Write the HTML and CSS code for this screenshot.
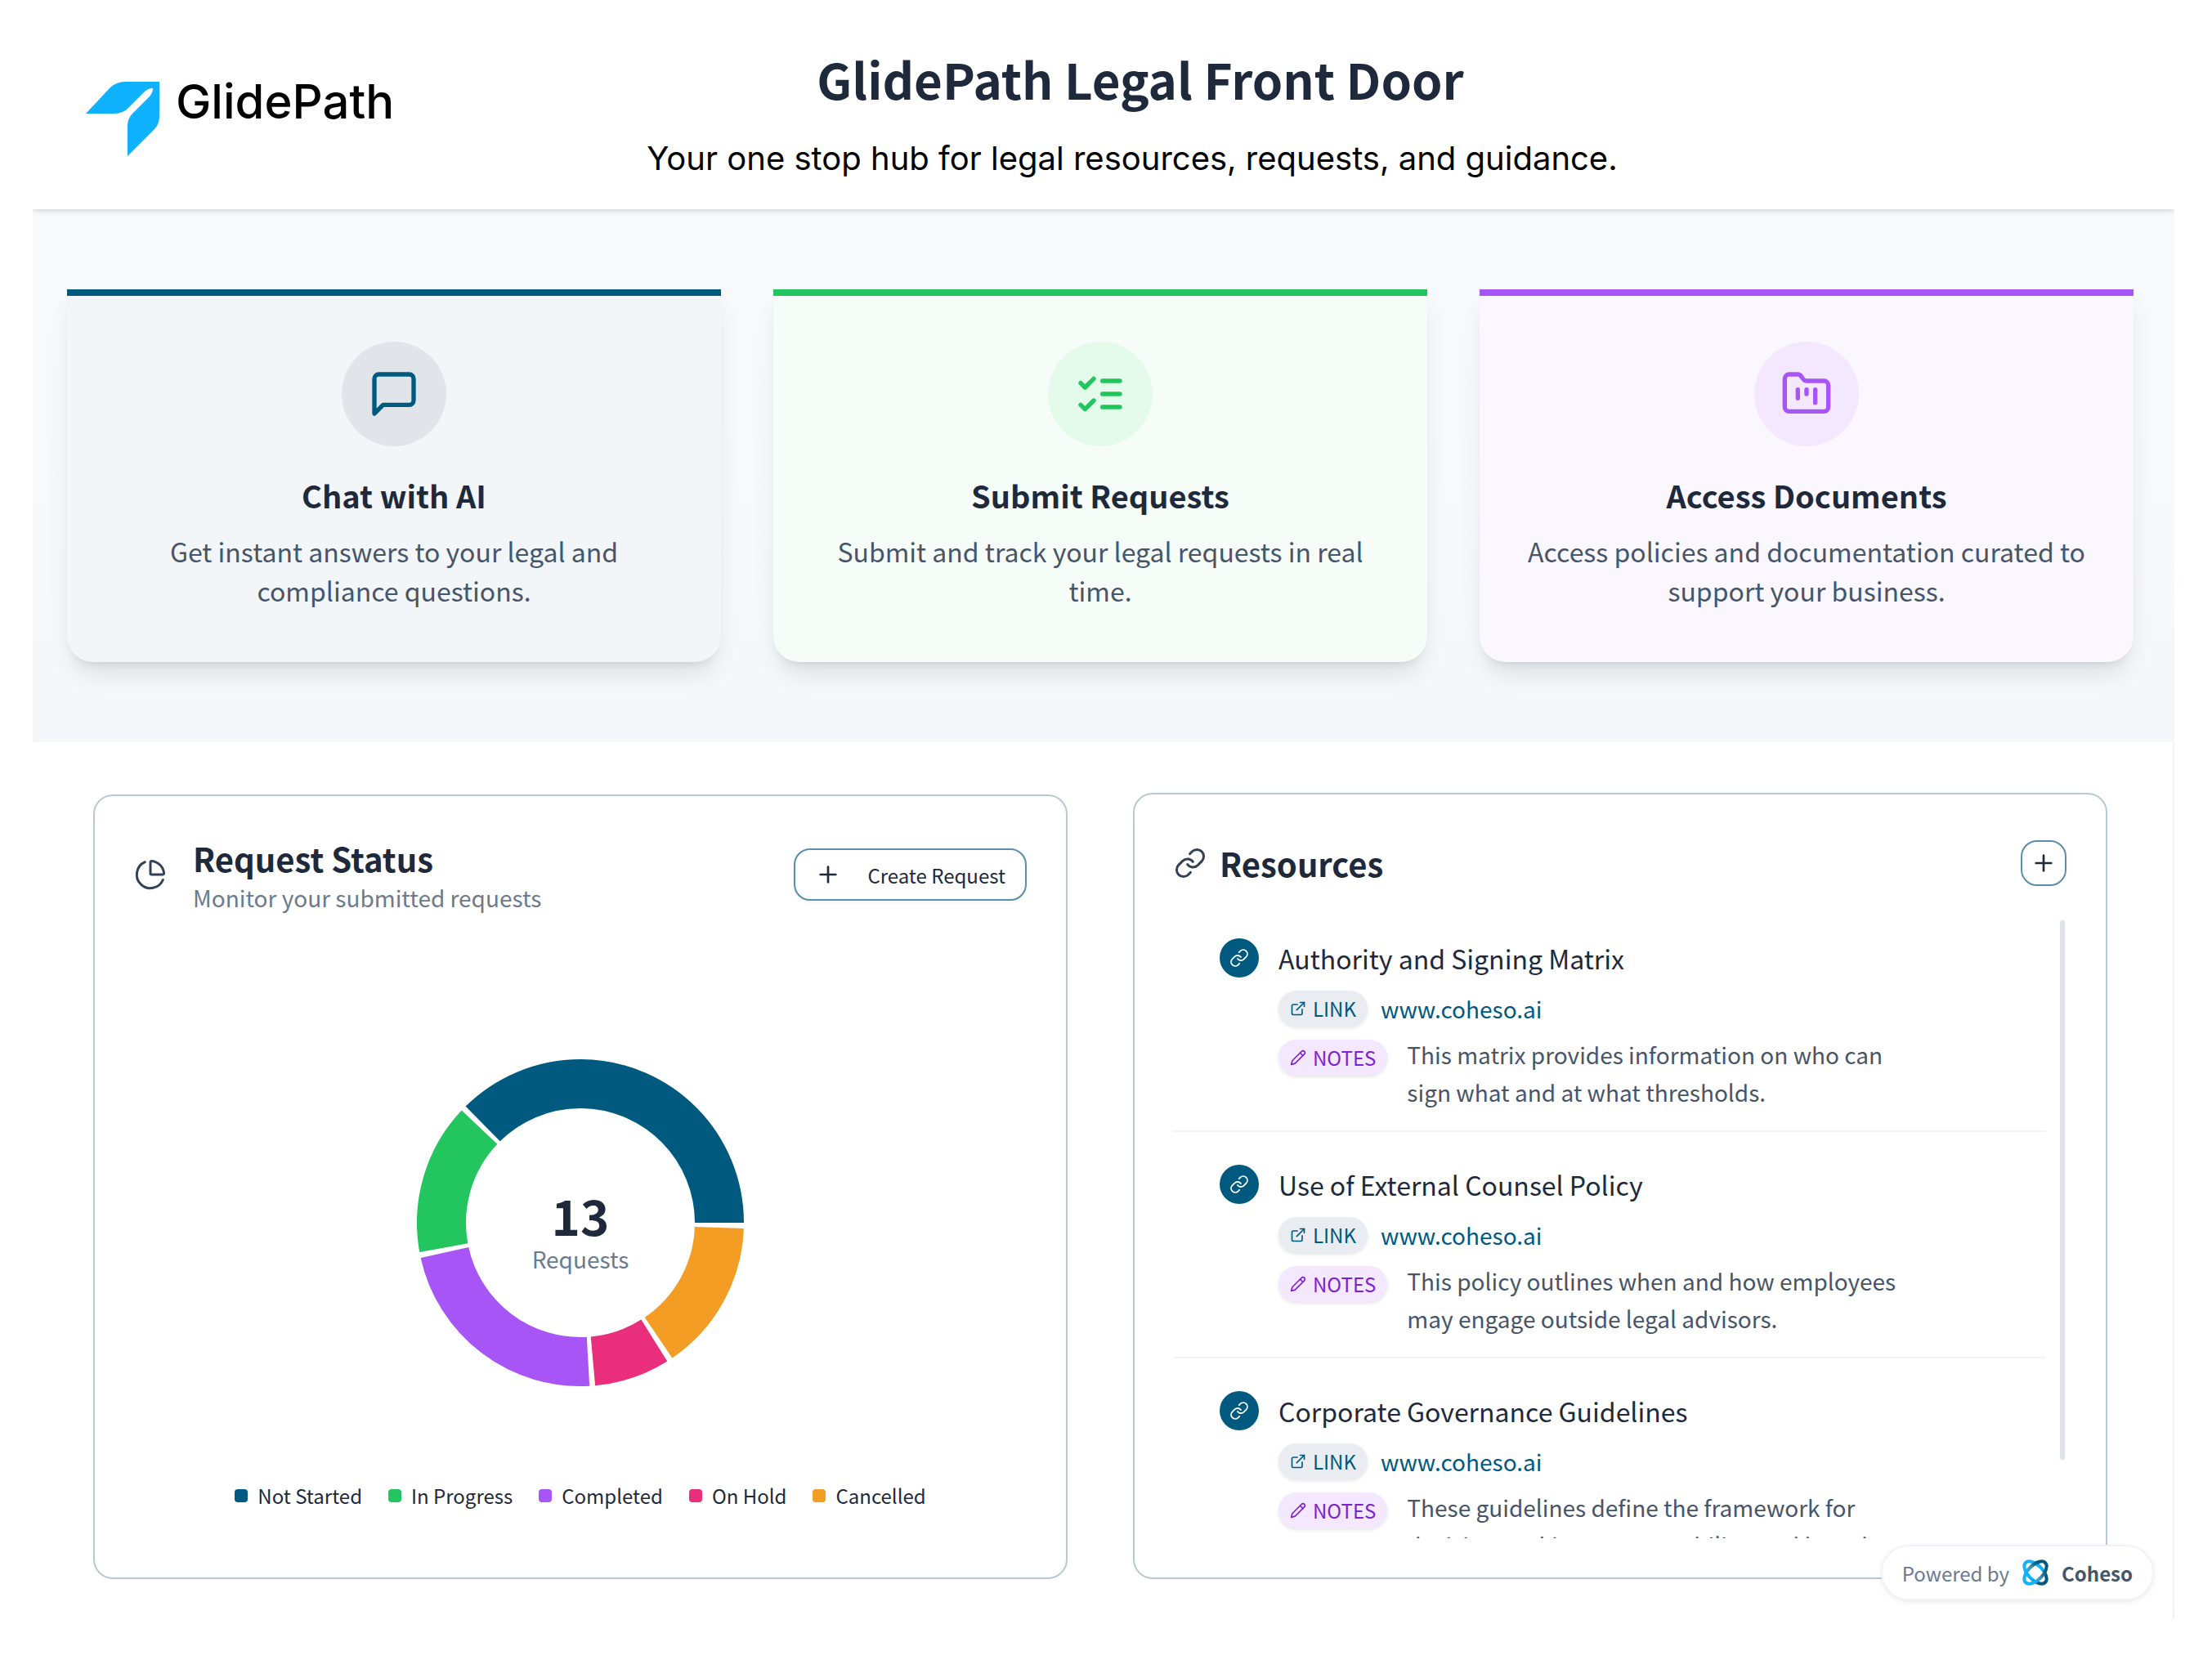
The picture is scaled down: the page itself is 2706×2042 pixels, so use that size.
FILE: index.html
```html
<!DOCTYPE html>
<html lang="en">
<head>
<meta charset="utf-8">
<title>GlidePath Legal Front Door</title>
<link rel="stylesheet" href="styles.css">
</head>
<body>
<svg class="sprite" aria-hidden="true">
  <symbol id="link" viewBox="0 0 24 24"><path d="M10 13a5 5 0 0 0 7.54.54l3-3a5 5 0 0 0-7.07-7.07l-1.72 1.71"/><path d="M14 11a5 5 0 0 0-7.54-.54l-3 3a5 5 0 0 0 7.07 7.07l1.71-1.71"/></symbol>
  <symbol id="external" viewBox="0 0 24 24"><path d="M15 3h6v6"/><path d="M10 14 21 3"/><path d="M18 13v6a2 2 0 0 1-2 2H5a2 2 0 0 1-2-2V8a2 2 0 0 1 2-2h6"/></symbol>
  <symbol id="pencil" viewBox="0 0 24 24"><path d="M17 3a2.85 2.83 0 1 1 4 4L7.500 20.500 2 22l1.500-5.500Z"/><path d="m15 5 4 4"/></symbol>
  <symbol id="plus" viewBox="0 0 24 24"><path d="M5 12h14"/><path d="M12 5v14"/></symbol>
</svg>
<div class="page">
  <header class="header">
    <div class="brand">
      <svg class="brand-mark" viewBox="0 0 90 91" aria-hidden="true">
        <path fill="#0fb2ff" d="M0 39 29 8Q37 0 48 0H90V42Q90 51 85 57L51 91V54Q51 45 57 39L78 18Q82 13 82 8Q76 8 72 12L53 31Q46 39 35 39Z"/>
      </svg>
      <span class="brand-name">GlidePath</span>
    </div>
    <div class="intro">
      <h1>GlidePath Legal Front Door</h1>
      <p>Your one stop hub for legal resources, requests, and guidance.</p>
    </div>
  </header>
  <main>
    <section class="hero">
      <a class="card card-chat" href="#">
        <span class="card-icon"><svg viewBox="0 0 24 24"><path d="M21 15a2 2 0 0 1-2 2H7l-4 4V5a2 2 0 0 1 2-2h14a2 2 0 0 1 2 2z"/></svg></span>
        <h2>Chat with AI</h2>
        <p>Get instant answers to your legal and compliance questions.</p>
      </a>
      <a class="card card-submit" href="#">
        <span class="card-icon"><svg viewBox="0 0 24 24"><path d="m3 17 2 2 4-4"/><path d="m3 7 2 2 4-4"/><path d="M13 6h8"/><path d="M13 12h8"/><path d="M13 18h8"/></svg></span>
        <h2>Submit Requests</h2>
        <p>Submit and track your legal requests in real time.</p>
      </a>
      <a class="card card-docs" href="#">
        <span class="card-icon"><svg viewBox="0 0 24 24"><path d="M4 20h16a2 2 0 0 0 2-2V8a2 2 0 0 0-2-2h-7.930a2 2 0 0 1-1.660-.9l-.82-1.200A2 2 0 0 0 7.930 3H4a2 2 0 0 0-2 2v13c0 1.100.9 2 2 2Z"/><path d="M8 10v4"/><path d="M12 10v2"/><path d="M16 10v6"/></svg></span>
        <h2>Access Documents</h2>
        <p>Access policies and documentation curated to support your business.</p>
      </a>
    </section>
    <section class="panels">
      <article class="panel status">
        <div class="panel-head">
          <svg class="head-icon" viewBox="0 0 24 24"><path d="M21 12c.552 0 1.005-.449.950-.998a10 10 0 0 0-8.953-8.951c-.55-.055-.998.398-.998.950v8a1 1 0 0 0 1 1z"/><path d="M21.210 15.890A10 10 0 1 1 8 2.830"/></svg>
          <div class="head-text">
            <h2>Request Status</h2>
            <p>Monitor your submitted requests</p>
          </div>
          <button class="create" type="button"><svg><use href="#plus"/></svg>Create Request</button>
        </div>
        <div class="chart">
          <svg class="donut" viewBox="0 0 400 400" role="img" aria-label="Requests by status">
            <g fill="none" stroke-width="60">
              <circle cx="200" cy="200" r="170" pathLength="360" stroke="#005a80" stroke-dasharray="134.6 360" transform="rotate(-134.6 200 200)"/>
              <circle cx="200" cy="200" r="170" pathLength="360" stroke="#22c55e" stroke-dasharray="53.8 360" transform="rotate(-190.4 200 200)"/>
              <circle cx="200" cy="200" r="170" pathLength="360" stroke="#a855f7" stroke-dasharray="80.8 360" transform="rotate(-273.2 200 200)"/>
              <circle cx="200" cy="200" r="170" pathLength="360" stroke="#e92f7b" stroke-dasharray="26.9 360" transform="rotate(-302.1 200 200)"/>
              <circle cx="200" cy="200" r="170" pathLength="360" stroke="#f49d25" stroke-dasharray="53.8 360" transform="rotate(-358 200 200)"/>
            </g>
          </svg>
          <div class="total"><strong>13</strong><span>Requests</span></div>
        </div>
        <ul class="legend">
          <li class="not-started">Not Started</li>
          <li class="in-progress">In Progress</li>
          <li class="completed">Completed</li>
          <li class="on-hold">On Hold</li>
          <li class="cancelled">Cancelled</li>
        </ul>
      </article>
      <article class="panel resources">
        <div class="panel-head">
          <svg class="head-icon"><use href="#link"/></svg>
          <h2>Resources</h2>
          <button class="add" type="button" aria-label="Add resource"><svg><use href="#plus"/></svg></button>
        </div>
        <div class="scroller">
          <ul class="items">
            <li>
              <span class="bullet"><svg><use href="#link"/></svg></span>
              <div class="item-body">
                <h3>Authority and Signing Matrix</h3>
                <div class="row"><span class="tag tag-link"><svg><use href="#external"/></svg>LINK</span><a href="#">www.coheso.ai</a></div>
                <div class="row notes"><span class="tag tag-notes"><svg><use href="#pencil"/></svg>NOTES</span><p>This matrix provides information on who can sign what and at what thresholds.</p></div>
              </div>
            </li>
            <li>
              <span class="bullet"><svg><use href="#link"/></svg></span>
              <div class="item-body">
                <h3>Use of External Counsel Policy</h3>
                <div class="row"><span class="tag tag-link"><svg><use href="#external"/></svg>LINK</span><a href="#">www.coheso.ai</a></div>
                <div class="row notes"><span class="tag tag-notes"><svg><use href="#pencil"/></svg>NOTES</span><p>This policy outlines when and how employees may engage outside legal advisors.</p></div>
              </div>
            </li>
            <li>
              <span class="bullet"><svg><use href="#link"/></svg></span>
              <div class="item-body">
                <h3>Corporate Governance Guidelines</h3>
                <div class="row"><span class="tag tag-link"><svg><use href="#external"/></svg>LINK</span><a href="#">www.coheso.ai</a></div>
                <div class="row notes"><span class="tag tag-notes"><svg><use href="#pencil"/></svg>NOTES</span><p>These guidelines define the framework for decision-making, accountability, and board oversight.</p></div>
              </div>
            </li>
          </ul>
          <div class="track"><div class="thumb"></div></div>
        </div>
      </article>
    </section>
  </main>
  <a class="powered" href="#">
    <span>Powered by</span>
    <svg viewBox="0 0 32 32" fill="none" stroke-width="4" aria-hidden="true">
      <defs>
        <linearGradient id="rise" gradientUnits="userSpaceOnUse" x1="0" y1="0" x2="32" y2="0"><stop offset=".3" stop-color="#0fb2ff"/><stop offset=".5" stop-color="#4a8db0"/><stop offset=".8" stop-color="#005a80"/></linearGradient>
        <linearGradient id="fall" gradientUnits="userSpaceOnUse" x1="0" y1="0" x2="32" y2="0"><stop offset=".6" stop-color="#0fb2ff"/><stop offset=".85" stop-color="#005a80"/></linearGradient>
      </defs>
      <ellipse cx="16" cy="16" rx="17" ry="9" stroke="url(#fall)" transform="rotate(45 16 16)"/>
      <ellipse cx="16" cy="16" rx="17" ry="9" stroke="url(#rise)" transform="rotate(-45 16 16)"/>
    </svg>
    <strong>Coheso</strong>
  </a>
</div>
</body>
</html>
```
FILE: styles.css
```css
* { box-sizing: border-box; }
body {
  margin: 0;
  background: #fff;
  color: #1e293b;
  font-family: "Noto Sans CJK SC", "Noto Sans", sans-serif;
}
h1, h2, h3, p, ul { margin: 0; padding: 0; }
ul { list-style: none; }
a { color: inherit; text-decoration: none; }
svg { display: block; flex: none; fill: none; stroke-linecap: round; stroke-linejoin: round; }
button { font: inherit; color: inherit; background: #fff; border: 2px solid #5a8fab; cursor: pointer; }
.sprite { position: absolute; width: 0; height: 0; }
.page { position: relative; margin: 0 46px 0 40px; padding-bottom: 62px; }

.header {
  position: relative;
  display: grid;
  grid-template-columns: 690px 1fr 620px;
  height: 256px;
  background: #fff;
  box-shadow: 0 2px 6px rgba(0, 0, 0, .15);
  clip-path: inset(0 0 -12px 0);
}
.brand { display: flex; align-items: flex-start; gap: 20px; padding: 100px 0 0 65px; }
.brand-mark { width: 90px; height: 91px; stroke: none; }
.brand-name { font: 500 58px/48px Inter, sans-serif; color: #000; }
.intro { text-align: center; padding-top: 52px; }
.intro h1 { font-size: 60px; line-height: 88px; font-weight: 700; padding-left: 20px; }
.intro p { font: 400 40px/56px Inter, sans-serif; color: #000; margin-top: 26px; }

.hero {
  display: grid;
  grid-template-columns: repeat(3, 1fr);
  gap: 64px;
  padding: 98px 50px 98px 42px;
  background: linear-gradient(#f8f9fd, #f5f8fb);
}
.card {
  height: 456px;
  display: flex;
  flex-direction: column;
  align-items: center;
  text-align: center;
  padding: 56px 48px 0;
  border-radius: 0 0 32px 32px;
  border-top: 8px solid;
  box-shadow: 0 20px 30px -6px rgba(0, 0, 0, .1), 0 8px 12px -8px rgba(0, 0, 0, .12);
}
.card-icon { width: 128px; height: 128px; border-radius: 50%; display: grid; place-items: center; }
.card-icon svg { width: 64px; height: 64px; stroke: currentColor; stroke-width: 2; }
.card h2 { font-size: 38px; line-height: 56px; margin-top: 32px; color: #1e293b; }
.card p { font-size: 32px; line-height: 48px; margin-top: 16px; color: #475569; }
.card-chat { background: #f2f6f9; color: #005a80; }
.card-chat .card-icon { background: #e1e5ea; }
.card-submit { background: #f6fdf8; color: #22c55e; }
.card-submit .card-icon { background: #e4fbeb; }
.card-docs { background: #faf7ff; color: #a855f7; }
.card-docs .card-icon { background: #f3e8ff; }

.panels {
  display: grid;
  grid-template-columns: 1fr 1fr;
  gap: 80px;
  padding: 62px 80px 48px 74px;
  border-right: 2px solid #f1f3f8;
}
.panel { height: 962px; border: 2px solid #b8c8d6; border-radius: 24px; padding: 56px 48px 0; }
.panel-head { display: flex; align-items: center; }
.panel-head h2 { font-size: 40px; line-height: 48px; }
.head-icon { width: 40px; height: 40px; stroke: #334155; stroke-width: 1.8; }
.status { display: flex; flex-direction: column; margin-top: 2px; height: 960px; padding-top: 46px; }
.status .head-text { flex: 1; padding: 6px 0 0 32px; }
.head-text p { font-size: 28px; line-height: 44px; margin-top: 2px; color: #6b7a8d; }
.create {
  display: flex;
  align-items: center;
  gap: 32px;
  height: 64px;
  padding: 0 24px;
  border-radius: 20px;
  font-size: 24px;
  box-shadow: 0 2px 4px rgba(0, 0, 0, .05);
}
.create svg, .add svg { width: 32px; height: 32px; stroke: currentColor; stroke-width: 2; }
.chart { display: grid; place-items: center; margin-top: 176px; }
.donut, .total { grid-area: 1 / 1; }
.donut { width: 400px; height: 400px; stroke-linecap: butt; }
.total { display: flex; flex-direction: column; align-items: center; padding-top: 24px; }
.total strong { font-size: 60px; line-height: 64px; }
.total span { font-size: 28px; line-height: 44px; color: #6b7a8d; }
.legend { display: flex; justify-content: center; gap: 32px; margin-top: 116px; font-size: 24px; line-height: 36px; }
.legend li { display: flex; align-items: center; gap: 12px; }
.legend li::before { content: ""; width: 16px; height: 16px; border-radius: 4px; background: var(--dot); }
.not-started { --dot: #005a80; }
.in-progress { --dot: #22c55e; }
.completed { --dot: #a855f7; }
.on-hold { --dot: #e92f7b; }
.cancelled { --dot: #f49d25; }

.resources h2 { flex: 1; padding-left: 16px; }
.add { display: grid; place-items: center; width: 56px; height: 56px; padding: 0; border-radius: 20px; }
.scroller { display: flex; height: 756px; margin-top: 42px; overflow: hidden; }
.items { flex: 1; }
.items li { display: flex; gap: 24px; height: 277px; padding: 22px 0 0 56px; border-bottom: 2px solid #f1f3f8; }
.items li:first-child { height: 259px; }
.items li + li { padding-top: 40px; }
.bullet { flex: none; width: 48px; height: 48px; border-radius: 50%; background: #005a80; display: grid; place-items: center; }
.bullet svg { width: 24px; height: 24px; stroke: #fff; stroke-width: 1.8; }
.item-body { flex: 1; }
.item-body h3 { font-size: 32px; line-height: 48px; font-weight: 400; }
.row { display: flex; align-items: center; gap: 16px; margin-top: 16px; }
.row a { font-size: 28px; line-height: 44px; color: #005a80; }
.row.notes { align-items: flex-start; gap: 24px; }
.row p { width: 620px; font-size: 28px; line-height: 46px; color: #475569; margin-top: -5px; }
.tag { display: flex; align-items: center; gap: 8px; height: 44px; padding: 0 14px; border-radius: 22px; font-size: 24px; line-height: 44px; box-shadow: 0 2px 4px rgba(0, 0, 0, .1); }
.tag svg { width: 20px; height: 20px; stroke: currentColor; stroke-width: 2; }
.tag-link { background: #e9edf1; color: #005a80; }
.tag-notes { background: #f3e8ff; color: #7e22ce; }
.track { width: 26px; padding-left: 18px; }
.thumb { width: 6px; height: 660px; border-radius: 3px; background: #e0e4ea; }

.powered {
  position: absolute;
  right: 25px;
  bottom: 84px;
  display: flex;
  align-items: center;
  gap: 16px;
  height: 68px;
  padding: 0 24px;
  border: 2px solid #f1f3f8;
  border-radius: 34px;
  background: #fff;
  box-shadow: 0 2px 6px rgba(0, 0, 0, .08);
  font-size: 24px;
  color: #6b7a8d;
}
.powered svg { width: 32px; height: 32px; overflow: visible; }
.powered strong { color: #475569; }
```
